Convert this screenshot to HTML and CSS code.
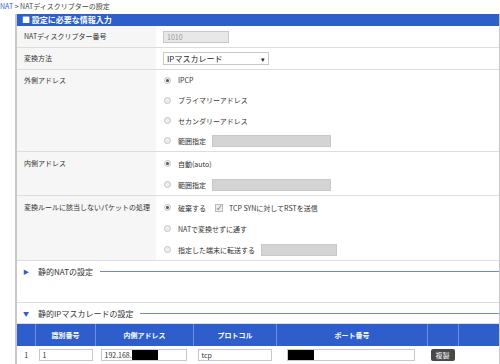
FILE: index.html
```html
<!DOCTYPE html>
<html lang="ja">
<head>
  <meta charset="UTF-8">
  <title>NATディスクリプターの設定</title>
  <link rel="stylesheet" href="styles.css">
</head>
<body>

  <div class="crumb"><span class="link">NAT</span> &gt; NATディスクリプターの設定</div>

  <div class="panel">
    <div class="bar">■ 設定に必要な情報入力</div>

    <div class="row simple">
      <div class="label">NATディスクリプター番号</div>
      <div class="value"><span class="field ro">1010</span></div>
    </div>

    <div class="row simple">
      <div class="label">変換方法</div>
      <div class="value">
        <span class="select">IPマスカレード<span class="arrow">▾</span></span>
      </div>
    </div>

    <div class="row tight">
      <div class="label">外側アドレス</div>
      <div class="value">
        <div class="opt"><span class="radio on"></span>IPCP</div>
        <div class="opt"><span class="radio"></span>プライマリーアドレス</div>
        <div class="opt"><span class="radio"></span>セカンダリーアドレス</div>
        <div class="opt"><span class="radio"></span>範囲指定<span class="field gray"></span></div>
      </div>
    </div>

    <div class="row">
      <div class="label">内側アドレス</div>
      <div class="value">
        <div class="opt"><span class="radio on"></span>自動(auto)</div>
        <div class="opt"><span class="radio"></span>範囲指定<span class="field gray"></span></div>
      </div>
    </div>

    <div class="row">
      <div class="label">変換ルールに該当しないパケットの処理</div>
      <div class="value">
        <div class="opt"><span class="radio on"></span>破棄する<span class="check">✓</span>TCP SYNに対してRSTを送信</div>
        <div class="opt"><span class="radio"></span>NATで変換せずに通す</div>
        <div class="opt"><span class="radio"></span>指定した端末に転送する<span class="field gray short"></span></div>
      </div>
    </div>

    <div class="section nat">
      <div class="title"><span class="tri">▶</span>静的NATの設定<span class="line"></span></div>
    </div>

    <div class="section">
      <div class="title"><span class="tri">▼</span>静的IPマスカレードの設定<span class="line"></span></div>
    </div>

    <table class="grid">
      <tr>
        <th class="c-no"></th>
        <th class="c-id">識別番号</th>
        <th class="c-in">内側アドレス</th>
        <th class="c-proto">プロトコル</th>
        <th class="c-port">ポート番号</th>
        <th class="c-btn"></th>
        <th></th>
      </tr>
      <tr>
        <td class="num">1</td>
        <td><span class="field in-id">1</span></td>
        <td><span class="field in-addr">192.168.<span class="mask"></span></span></td>
        <td><span class="field in-proto">tcp</span></td>
        <td><span class="field in-port"><span class="mask"></span></span></td>
        <td><span class="copy">複製</span></td>
        <td></td>
      </tr>
    </table>
  </div>

</body>
</html>
```

FILE: styles.css
```css
body {
  margin: 0;
  background-color: #fff;
  color: #333;
  font-family: "Noto Sans CJK JP", "Noto Sans", sans-serif;
  font-size: 7px;
}

.crumb {
  height: 12px;
  line-height: 12px;
  margin-bottom: 2px;
  color: #444;
}

.crumb .link {
  color: #2d5ecb;
}

.panel {
  margin-left: 15px;
  width: 482px;
  border-left: 2px solid #c8c8c8;
  border-right: 1px solid #c8c8c8;
  min-height: 350px;
}

.bar {
  height: 12px;
  line-height: 12px;
  background-color: #2d5ecb;
  color: #fff;
  font-weight: bold;
  font-size: 8px;
  padding-left: 5px;
}

/* form rows */
.row {
  display: grid;
  grid-template-columns: 139px 1fr;
  border-bottom: 1px solid #ddd;
}

.label {
  background-color: #f6f6f6;
  padding: 1px 7px 0;
  line-height: 21px;
  white-space: nowrap;
}

.value {
  padding: 1px 7px 0;
}

.row.simple .label,
.row.simple .value {
  display: flex;
  align-items: center;
  height: 21px;
  padding-top: 0;
}

.row.tight .label,
.row.tight .value {
  padding-top: 0;
  line-height: 20.25px;
}

.row.tight .opt {
  height: 20.25px;
}

.opt {
  display: flex;
  align-items: center;
  height: 21px;
}

.radio {
  width: 5px;
  height: 5px;
  border: 1px solid #c4c4c4;
  background-color: #eee;
  border-radius: 50%;
  margin: 0 7px 0 1px;
  position: relative;
}

.radio.on::after {
  content: "";
  position: absolute;
  left: 1px;
  top: 1px;
  width: 3px;
  height: 3px;
  border-radius: 50%;
  background-color: #555;
}

.check {
  width: 6px;
  height: 6px;
  border: 1px solid #bbb;
  background-color: #eee;
  font-size: 6px;
  line-height: 6px;
  text-align: center;
  color: #333;
  margin: 0 6px 0 9px;
}

.field {
  display: inline-block;
  height: 10px;
  line-height: 10px;
  border: 1px solid #c8c8c8;
  background-color: #fff;
  padding: 0 3px;
  font-size: 7px;
  box-sizing: content-box;
  vertical-align: middle;
}

.field.ro {
  width: 58px;
  background-color: #e8e8e8;
  color: #999;
}

.field.gray {
  width: 111px;
  background-color: #d4d4d4;
  margin-left: 6px;
}

.field.short {
  width: 68px;
}

.select {
  display: flex;
  justify-content: space-between;
  align-items: center;
  width: 98px;
  height: 11px;
  padding: 0 3px;
  border: 1px solid #c8c8c8;
  font-size: 8px;
  color: #222;
}

.arrow {
  font-size: 7px;
}

/* sections */
.section {
  border-bottom: 1px solid #ddd;
  height: 20px;
}

.section.nat {
  height: 41px;
}

.title {
  display: flex;
  align-items: center;
  height: 20px;
  padding-left: 6px;
  font-size: 8px;
  color: #333;
}

.tri {
  color: #2d5ecb;
  font-size: 6px;
  width: 15px;
}

.line {
  flex: 1;
  height: 1px;
  margin-left: 7px;
  background-color: #6b8bd6;
}

/* table */
.grid {
  border-collapse: collapse;
  width: 100%;
  table-layout: fixed;
}

.grid th {
  background-color: #2d5ecb;
  color: #fff;
  height: 22px;
  font-weight: bold;
  font-size: 7px;
  border-left: 1px solid #6f8fdc;
  padding: 0;
}

.grid th:first-child {
  border-left: none;
}

.grid td {
  height: 18px;
  padding: 0 3px;
  border-bottom: 1px solid #2d5ecb;
}

.c-no { width: 18px; }
.c-id { width: 59px; }
.c-in { width: 97px; }
.c-proto { width: 82px; }
.c-port { width: 150px; }
.c-btn { width: 30px; }

.num {
  text-align: center;
}

.in-id { width: 46px; }
.in-addr { width: 78px; margin-left: 2px; }
.in-proto { width: 66px; margin-left: 1px; }
.in-port { width: 123px; margin-left: 7px; padding-left: 0; }

.mask {
  display: inline-block;
  width: 26px;
  height: 10px;
  background-color: #000;
  vertical-align: top;
}

.copy {
  display: inline-block;
  background-color: #484848;
  color: #fff;
  font-size: 7px;
  line-height: 12px;
  padding: 0 5px;
  border-radius: 2px;
}
```
